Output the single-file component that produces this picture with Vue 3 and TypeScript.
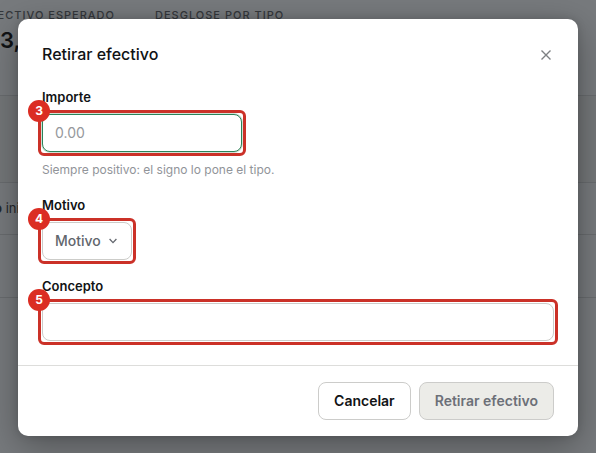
<script setup lang="ts">
import { computed, ref } from 'vue'

const amount = ref('')
const reason = ref('')
const concept = ref('')
const ready = computed(() => Number(amount.value) > 0 && concept.value !== '')
</script>

<template>
  <div class="screen">
    <main class="page" aria-hidden="true">
      <section class="stats">
        <div class="stat">
          <span class="stat-label">ectivo esperado</span>
          <span class="stat-value">3,</span>
        </div>
        <div class="stat">
          <span class="stat-label">Desglose por tipo</span>
        </div>
      </section>
      <div class="band"></div>
      <div class="row"><b>o</b> ini</div>
      <div class="row tall"></div>
    </main>

    <div class="overlay">
      <form class="modal" role="dialog" aria-labelledby="title" @submit.prevent>
        <header class="head">
          <h1 id="title">Retirar efectivo</h1>
          <button class="close" type="button" aria-label="Cerrar">
            <svg viewBox="0 0 12 12" width="12" height="12">
              <path d="M1.5 1.5 L10.5 10.5 M10.5 1.5 L1.5 10.5" />
            </svg>
          </button>
        </header>

        <div class="body">
          <div class="field">
            <label for="amount">Importe</label>
            <div class="marked short">
              <input id="amount" v-model="amount" class="control active" type="text" inputmode="decimal" placeholder="0.00" />
              <span class="badge">3</span>
            </div>
            <p class="hint">Siempre positivo: el signo lo pone el tipo.</p>
          </div>

          <div class="field">
            <label for="reason">Motivo</label>
            <div class="marked fit">
              <select id="reason" v-model="reason" class="control select">
                <option value="">Motivo</option>
              </select>
              <svg class="chevron" viewBox="0 0 8 6" width="8" height="6">
                <path d="M0.6 1 L4 4.6 L7.4 1" />
              </svg>
              <span class="badge">4</span>
            </div>
          </div>

          <div class="field">
            <label for="concept">Concepto</label>
            <div class="marked">
              <input id="concept" v-model="concept" class="control" type="text" />
              <span class="badge">5</span>
            </div>
          </div>
        </div>

        <footer class="foot">
          <button class="btn" type="button">Cancelar</button>
          <button class="btn primary" type="submit" :disabled="!ready">Retirar efectivo</button>
        </footer>
      </form>
    </div>
  </div>
</template>

<style>
body {
  margin: 0;
  background: #777a7d;
}
</style>

<style scoped>
.screen {
  position: relative;
  min-height: 100vh;
  overflow: hidden;
  font-family: Inter, "Liberation Sans", sans-serif;
  color: #111315;
}
.screen * {
  box-sizing: border-box;
}
.page {
  position: absolute;
  inset: 0;
  overflow: hidden;
  background: #777a7d;
}
.stats {
  display: flex;
  gap: 40px;
  height: 96px;
  padding-top: 7px;
  border-bottom: 1px solid #696c6f;
}
.stat {
  display: flex;
  flex-direction: column;
  align-items: flex-start;
}
.stat:first-child {
  width: 115px;
}
.stat-label {
  align-self: flex-end;
  font-size: 11px;
  line-height: 16px;
  font-weight: 500;
  letter-spacing: 1px;
  text-transform: uppercase;
  white-space: nowrap;
  color: #35383c;
}
.stat-value {
  font-size: 22px;
  line-height: 34px;
  font-weight: 600;
}
.band {
  height: 87px;
  background: #747779;
  border-bottom: 1px solid #696c6f;
}
.row {
  height: 52px;
  border-bottom: 1px solid #696c6f;
  font-size: 13px;
  line-height: 50px;
  text-indent: -6px;
  color: #25282b;
}
.row.tall {
  height: 63px;
}
.overlay {
  position: relative;
  display: flex;
  justify-content: center;
  padding: 19px 18px 17px;
}
.modal {
  width: 100%;
  max-width: 560px;
  border-radius: 10px;
  background: #fff;
  box-shadow: 0 10px 36px rgba(0, 0, 0, 0.32), 0 0 8px rgba(0, 0, 0, 0.14);
}
.head {
  display: flex;
  align-items: center;
  justify-content: space-between;
  padding: 24px 24px 0;
}
h1 {
  margin: 0;
  font-size: 16px;
  line-height: 22px;
  font-weight: 500;
}
.close {
  display: grid;
  place-items: end center;
  width: 16px;
  height: 14px;
  padding: 0;
  border: 0;
  background: none;
}
.close svg {
  display: block;
}
.close path {
  fill: none;
  stroke: #7d8083;
  stroke-width: 1.4;
}
.body {
  display: flex;
  flex-direction: column;
  gap: 18px;
  padding: 24px;
}
.field {
  display: flex;
  flex-direction: column;
  gap: 8px;
}
label {
  font-size: 13px;
  line-height: 17px;
  font-weight: 600;
}
.marked {
  position: relative;
  border-radius: 2px;
  outline: 3px solid #cb3128;
  outline-offset: 1px;
}
.marked.short {
  width: 200px;
}
.marked.fit {
  align-self: flex-start;
}
.badge {
  position: absolute;
  top: -14px;
  left: -14px;
  width: 22px;
  height: 22px;
  border-radius: 50%;
  background: #db2d23;
  color: #fff;
  font-size: 12px;
  line-height: 22px;
  font-weight: 700;
  text-align: center;
}
.control {
  display: block;
  width: 100%;
  height: 38px;
  padding: 0 12px 2px;
  border: 1px solid #ccccc9;
  border-radius: 8px;
  outline: none;
  background: #fff;
  color: #111315;
  font-family: inherit;
  font-size: 14px;
}
.control::placeholder {
  color: #95989c;
  opacity: 1;
}
.control.active {
  border-color: #2b8259;
  box-shadow: 0 0 0 1px #d0e0d3;
}
.select {
  width: auto;
  padding-right: 30px;
  appearance: none;
  color: #62666d;
  font-weight: 500;
}
.chevron {
  position: absolute;
  top: 16px;
  right: 15px;
  pointer-events: none;
}
.chevron path {
  fill: none;
  stroke: #62666d;
  stroke-width: 1.3;
}
.hint {
  margin: 0;
  font-size: 12px;
  line-height: 19px;
  color: #919499;
}
.foot {
  display: flex;
  justify-content: flex-end;
  gap: 8px;
  padding: 16px 24px;
  border-top: 1px solid #dddddb;
}
.btn {
  height: 38px;
  padding: 0 15px 2px;
  border: 1px solid #ccccca;
  border-radius: 8px;
  background: #fff;
  color: #111315;
  font-family: inherit;
  font-size: 14px;
  font-weight: 600;
}
.btn.primary:disabled {
  background: #ecece8;
  color: #6c7078;
}
</style>
